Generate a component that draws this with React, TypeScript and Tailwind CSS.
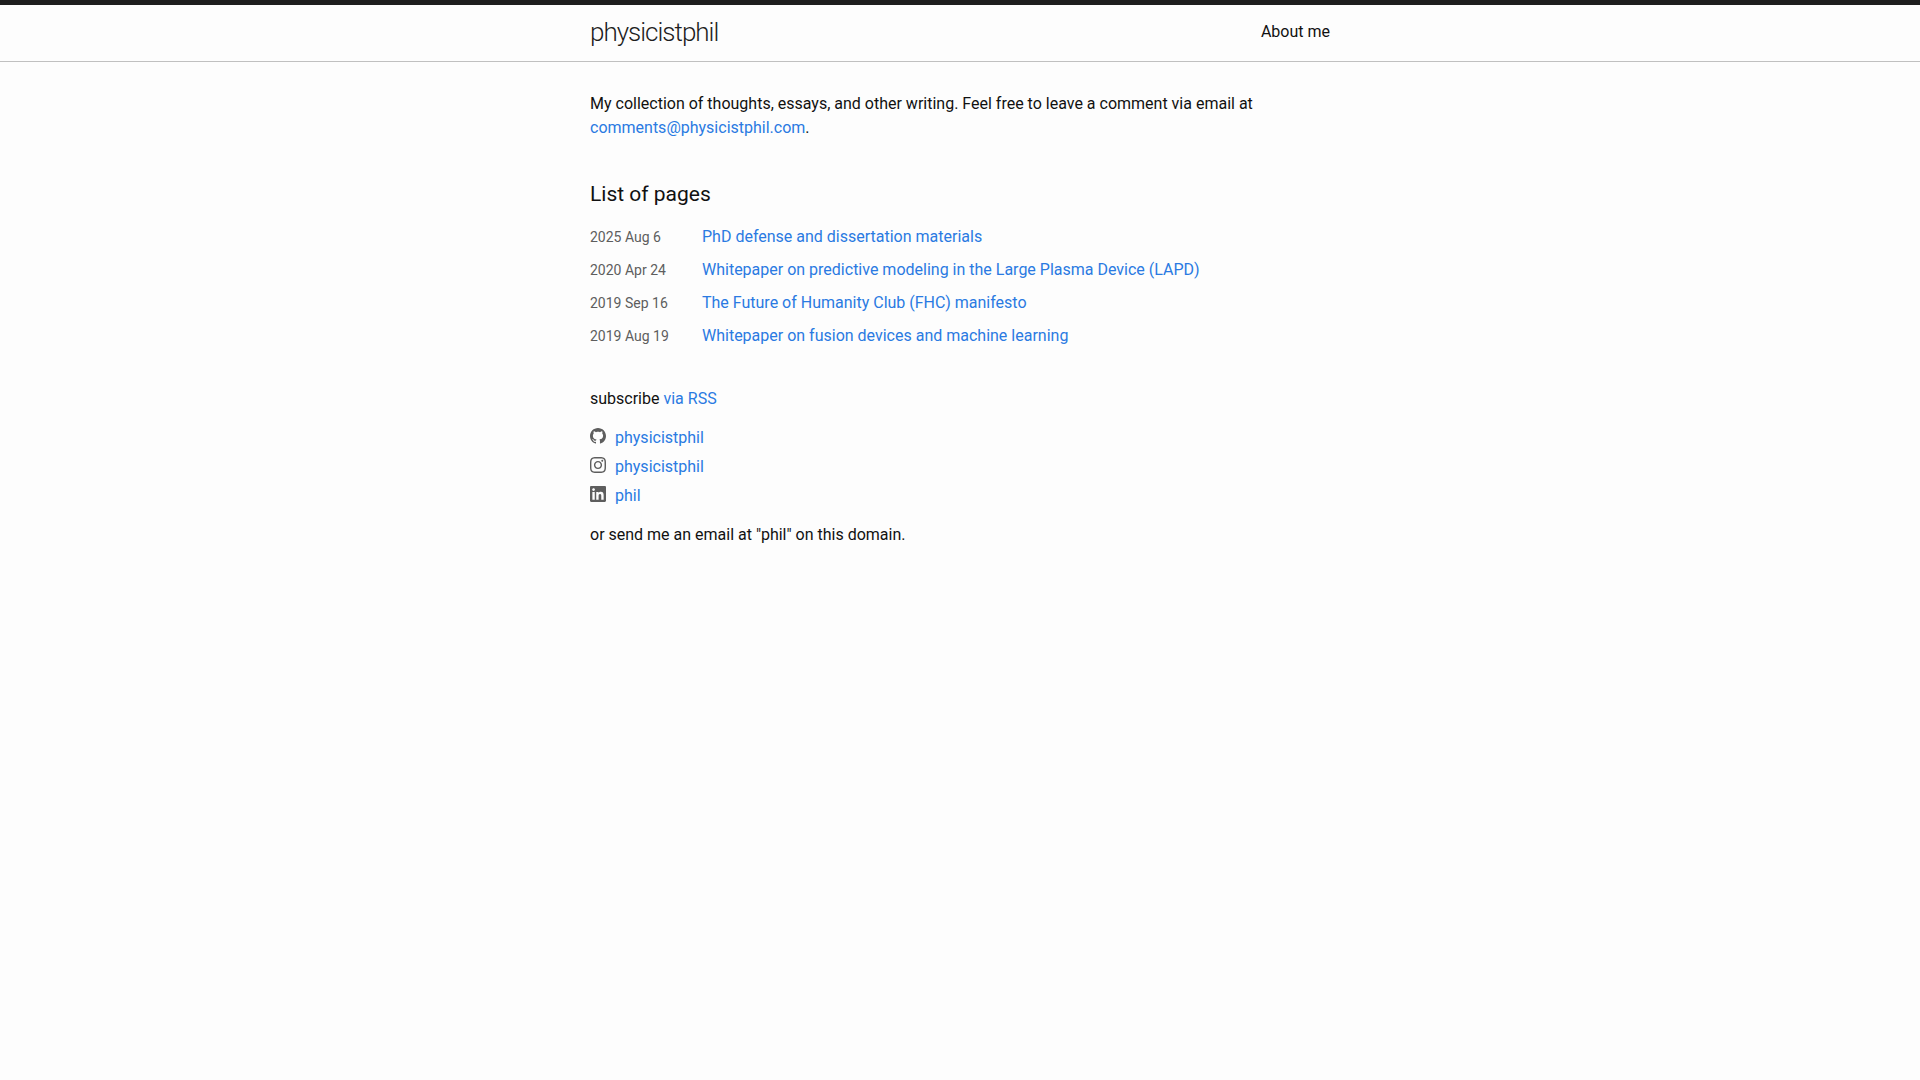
import React from 'react';

interface Page {
  date: string;
  title: string;
}

interface Social {
  name: string;
  user: string;
  href: string;
  path: string;
}

const pages: Page[] = [
  { date: '2025 Aug 6', title: 'PhD defense and dissertation materials' },
  { date: '2020 Apr 24', title: 'Whitepaper on predictive modeling in the Large Plasma Device (LAPD)' },
  { date: '2019 Sep 16', title: 'The Future of Humanity Club (FHC) manifesto' },
  { date: '2019 Aug 19', title: 'Whitepaper on fusion devices and machine learning' },
];

const socials: Social[] = [
  {
    name: 'GitHub',
    user: 'physicistphil',
    href: 'https://github.com/physicistphil',
    path: 'M8 0C3.58 0 0 3.582 0 8c0 3.535 2.292 6.533 5.47 7.59.4.075.547-.172.547-.385 0-.19-.007-.693-.01-1.36-2.226.483-2.695-1.073-2.695-1.073-.364-.924-.89-1.17-.89-1.17-.725-.496.056-.486.056-.486.803.056 1.225.824 1.225.824.714 1.223 1.873.87 2.33.665.072-.517.278-.87.507-1.07-1.777-.2-3.644-.888-3.644-3.953 0-.873.31-1.587.823-2.147-.09-.202-.36-1.015.07-2.117 0 0 .67-.215 2.2.82.64-.178 1.32-.266 2-.27.68.004 1.36.092 2 .27 1.52-1.035 2.19-.82 2.19-.82.43 1.102.16 1.915.08 2.117.51.56.82 1.274.82 2.147 0 3.073-1.87 3.75-3.65 3.947.28.24.54.73.54 1.48 0 1.07-.01 1.93-.01 2.19 0 .21.14.46.55.38C13.71 14.53 16 11.53 16 8c0-4.418-3.582-8-8-8',
  },
  {
    name: 'Instagram',
    user: 'physicistphil',
    href: 'https://instagram.com/physicistphil',
    path: 'M8 0C5.827 0 5.555.01 4.702.048 3.85.088 3.27.222 2.76.42c-.526.204-.973.478-1.417.923-.445.444-.72.89-.923 1.417-.198.51-.333 1.09-.372 1.942C.008 5.555 0 5.827 0 8s.01 2.445.048 3.298c.04.852.174 1.433.372 1.942.204.526.478.973.923 1.417.444.445.89.72 1.417.923.51.198 1.09.333 1.942.372.853.04 1.125.048 3.298.048s2.445-.01 3.298-.048c.852-.04 1.433-.174 1.942-.372.526-.204.973-.478 1.417-.923.445-.444.72-.89.923-1.417.198-.51.333-1.09.372-1.942.04-.853.048-1.125.048-3.298s-.01-2.445-.048-3.298c-.04-.852-.174-1.433-.372-1.942-.204-.526-.478-.973-.923-1.417-.444-.445-.89-.72-1.417-.923-.51-.198-1.09-.333-1.942-.372C10.445.008 10.173 0 8 0zm0 1.44c2.136 0 2.39.01 3.233.048.78.036 1.203.166 1.485.276.374.145.64.318.92.598.28.28.453.546.598.92.11.282.24.705.276 1.485.038.844.047 1.097.047 3.233s-.01 2.39-.05 3.233c-.04.78-.17 1.203-.28 1.485-.15.374-.32.64-.6.92-.28.28-.55.453-.92.598-.28.11-.71.24-1.49.276-.85.038-1.1.047-3.24.047s-2.39-.01-3.24-.05c-.78-.04-1.21-.17-1.49-.28-.38-.15-.64-.32-.92-.6-.28-.28-.46-.55-.6-.92-.11-.28-.24-.71-.28-1.49-.03-.84-.04-1.1-.04-3.23s.01-2.39.04-3.24c.04-.78.17-1.21.28-1.49.14-.38.32-.64.6-.92.28-.28.54-.46.92-.6.28-.11.7-.24 1.48-.28.85-.03 1.1-.04 3.24-.04zm0 2.452c-2.27 0-4.108 1.84-4.108 4.108 0 2.27 1.84 4.108 4.108 4.108 2.27 0 4.108-1.84 4.108-4.108 0-2.27-1.84-4.108-4.108-4.108zm0 6.775c-1.473 0-2.667-1.194-2.667-2.667 0-1.473 1.194-2.667 2.667-2.667 1.473 0 2.667 1.194 2.667 2.667 0 1.473-1.194 2.667-2.667 2.667zm5.23-6.937c0 .53-.43.96-.96.96s-.96-.43-.96-.96.43-.96.96-.96.96.43.96.96z',
  },
  {
    name: 'LinkedIn',
    user: 'phil',
    href: 'https://www.linkedin.com/in/phil',
    path: 'M13.632 13.635h-2.37V9.922c0-.886-.018-2.025-1.234-2.025-1.235 0-1.424.964-1.424 1.96v3.778h-2.37V6H8.51v1.04h.03c.318-.6 1.092-1.233 2.247-1.233 2.4 0 2.845 1.58 2.845 3.637v4.188zM3.558 4.955c-.762 0-1.376-.617-1.376-1.377 0-.758.614-1.375 1.376-1.375.76 0 1.376.617 1.376 1.375 0 .76-.617 1.377-1.376 1.377zm1.188 8.68H2.37V6h2.376v7.635zM14.816 0H1.18C.528 0 0 .516 0 1.153v13.694C0 15.484.528 16 1.18 16h13.635c.652 0 1.185-.516 1.185-1.153V1.153C16 .516 15.467 0 14.815 0z',
  },
];

const linkClass = 'text-[#2a7ae2] hover:text-[#111] hover:underline';

const SiteHeader: React.FC = () => (
  <header className="border-t-[5px] border-b border-t-[#1e1e1e] border-b-[#c0c0c0]">
    <div className="mx-auto flex min-h-14 max-w-[800px] items-start justify-between px-[30px]">
      <a href="/" className="text-[26px] leading-[54px] font-light tracking-[-1px] text-[#1e1e1e]">
        physicistphil
      </a>
      <nav>
        <a href="/about" className="leading-[54px] text-[#111]">About me</a>
      </nav>
    </div>
  </header>
);

const PageList: React.FC = () => (
  <section>
    <h2 className="mb-[19px] text-[21px] leading-6">List of pages</h2>
    <ul className="space-y-[9px]">
      {pages.map((page) => (
        <li key={page.title} className="flex items-baseline">
          <span className="w-28 shrink-0 text-sm leading-6 text-[#5e5e5e]">{page.date}</span>
          <a href="#" className={linkClass}>{page.title}</a>
        </li>
      ))}
    </ul>
  </section>
);

const SocialList: React.FC = () => (
  <ul className="space-y-[5px]">
    {socials.map((social) => (
      <li key={social.name}>
        <a href={social.href} className={`flex w-fit items-start gap-[9px] ${linkClass}`}>
          <svg viewBox="0 0 16 16" className="mt-0.5 size-4 fill-[#5e5e5e]" aria-hidden="true">
            <path fillRule="evenodd" clipRule="evenodd" d={social.path} />
          </svg>
          <span>{social.user}</span>
        </a>
      </li>
    ))}
  </ul>
);

const App: React.FC = () => {
  return (
    <div className="min-h-screen bg-[#fdfdfd] font-['Roboto',sans-serif] text-base leading-6 text-[#111]">
      <SiteHeader />
      <main className="mx-auto max-w-[800px] px-[30px] py-[30px]">
        <p className="mb-[42px]">
          My collection of thoughts, essays, and other writing. Feel free to leave a comment via email at{' '}
          <a href="mailto:comments@physicistphil.com" className={linkClass}>comments@physicistphil.com</a>.
        </p>
        <PageList />
        <p className="mt-[39px] mb-[15px]">
          subscribe <a href="/feed.xml" className={linkClass}>via RSS</a>
        </p>
        <SocialList />
        <p className="mt-[15px]">or send me an email at "phil" on this domain.</p>
      </main>
    </div>
  );
};

export default App;
